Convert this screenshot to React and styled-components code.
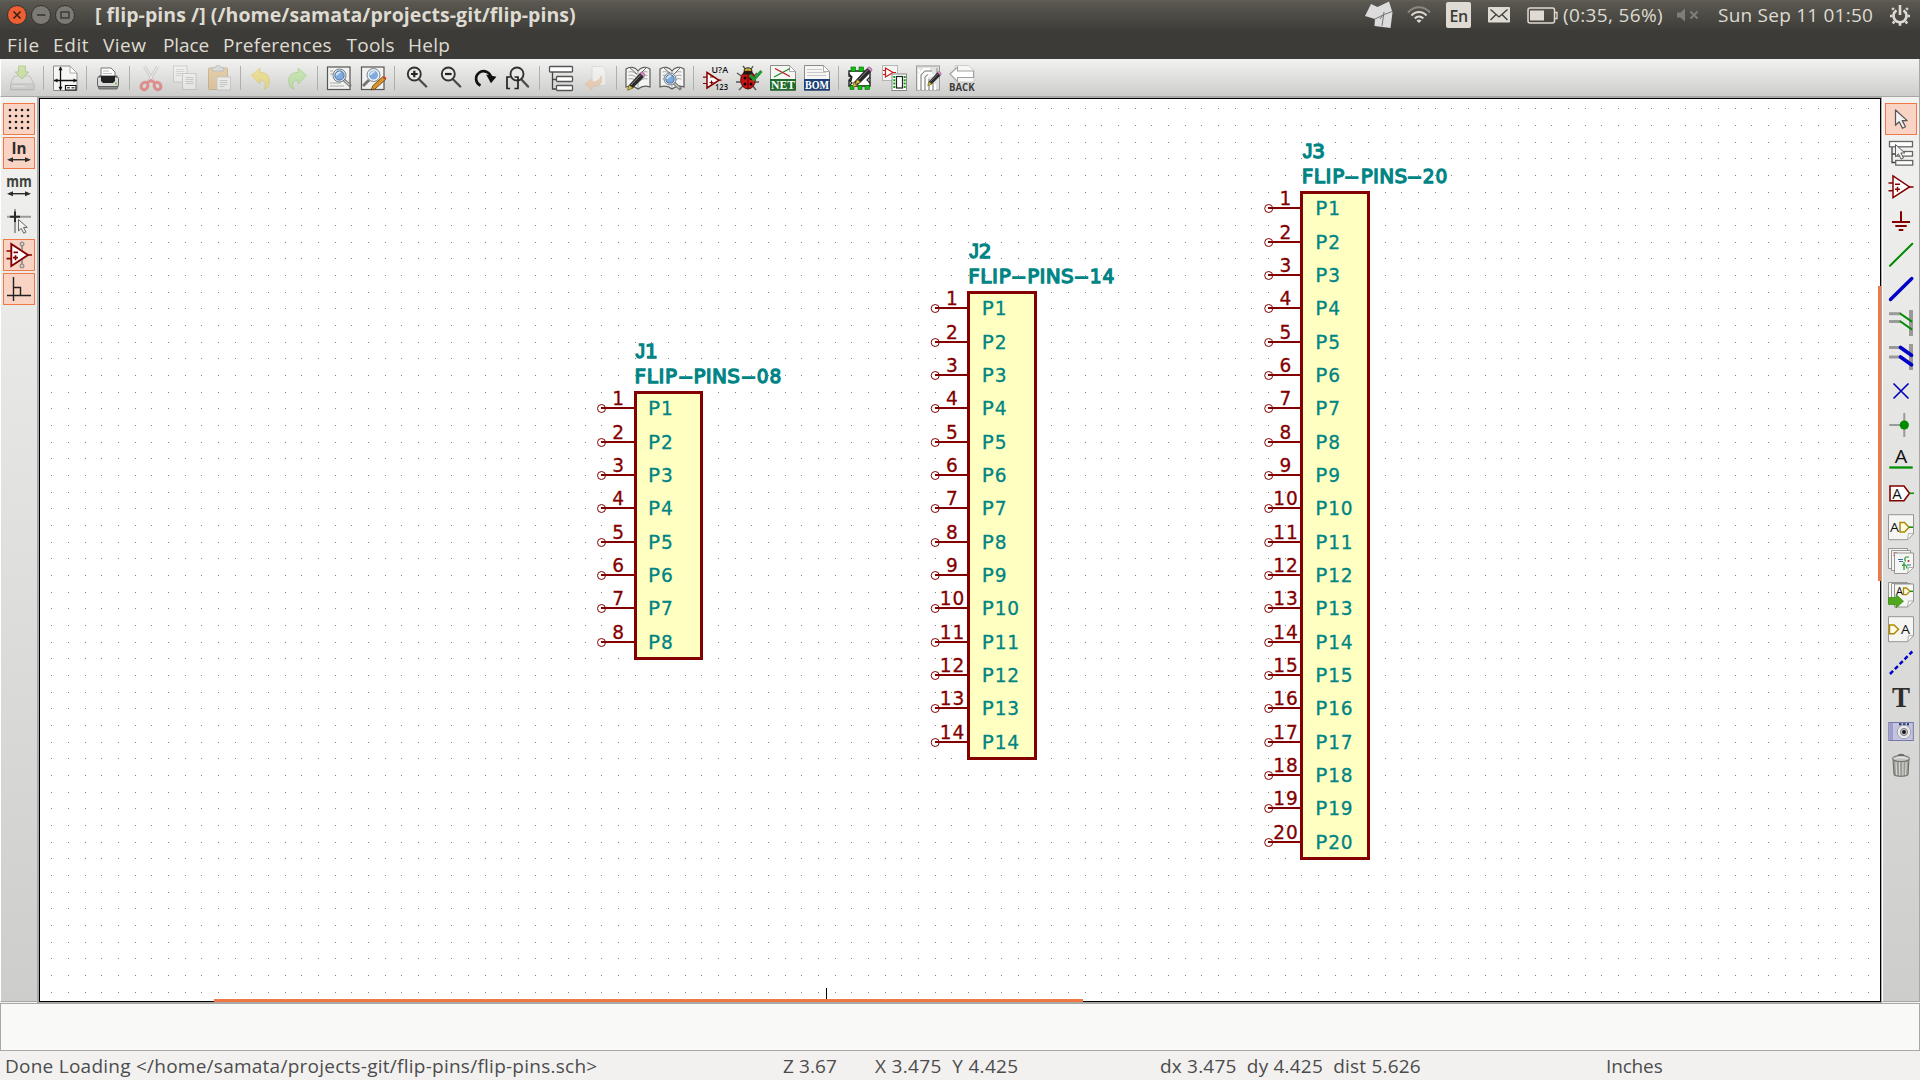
import React from "react";
import styled, { createGlobalStyle, css } from "styled-components";

const GlobalStyle = createGlobalStyle`
  * { box-sizing: border-box; }
  html, body { margin: 0; padding: 0; overflow: hidden; background: #f2f1f0; }
`;

const UI_FONT = '"Open Sans", "Noto Sans", sans-serif';
const STROKE_FONT = '"DejaVu Sans", sans-serif';
const MAROON = "#840000";
const TEAL = "#008484";

/* ---------- window chrome ---------- */

const Window = styled.div`
  display: flex;
  flex-direction: column;
  width: 1920px;
  height: 1080px;
  overflow: hidden;
  font-family: ${UI_FONT};
  color: #dfdbd2;
`;

const TitleBar = styled.header`
  display: flex;
  align-items: center;
  height: 30px;
  padding: 0 9px 0 7px;
  background: linear-gradient(#625f57 0, #5a5850 2px, #3e3d39 100%);
`;

const WindowButtons = styled.div`
  display: flex;
  gap: 4px;
  width: 88px;
`;

const WindowTitle = styled.h1`
  margin: 0;
  flex: 1;
  font-size: 19.5px;
  font-weight: 700;
  line-height: 30px;
  letter-spacing: ${(p) => p.$spacing}px;
  white-space: pre;
`;

const Tray = styled.div`
  display: flex;
  align-items: center;
  height: 30px;
`;

const TrayItem = styled.div`
  display: flex;
  align-items: center;
  width: ${(p) => p.$width}px;
  flex: none;
`;

const TrayText = styled.span`
  font-size: 19px;
  line-height: 30px;
  letter-spacing: ${(p) => p.$spacing}px;
  white-space: pre;
`;

const LanguageBadge = styled.span`
  width: 25px;
  height: 26px;
  border-radius: 2px;
  background: #dfdbd2;
  color: #3c3b37;
  font-size: 16px;
  font-weight: 600;
  line-height: 29px;
  text-align: center;
  letter-spacing: -0.5px;
`;

const MenuBar = styled.nav`
  display: flex;
  height: 29px;
  padding-left: 7px;
  background: #3c3b37;
`;

const MenuItem = styled.span`
  width: ${(p) => p.$width}px;
  font-size: 19px;
  line-height: 30px;
  letter-spacing: ${(p) => p.$spacing || 0}px;
  white-space: nowrap;
`;

/* ---------- toolbars ---------- */

const TopToolbar = styled.div`
  display: flex;
  align-items: center;
  height: 38px;
  padding-left: 4px;
  border-left: 1px solid #fff;
  border-right: 1px solid #a9a8a7;
  border-bottom: 1px solid #a9a8a7;
  background: linear-gradient(#f2f2f0, #cdcdcb);
`;

const ToolButton = styled.span`
  display: flex;
  align-items: center;
  justify-content: center;
  width: 34px;
  height: 37px;
  opacity: ${(p) => (p.$disabled ? 0.42 : 1)};
  svg { width: 26px; height: 26px; margin-top: 1px; overflow: visible; }
`;

const Separator = styled.span`
  width: 1px;
  height: 24px;
  margin: 0 4px;
  background: #b0afae;
`;

const Workspace = styled.main`
  display: flex;
  height: 907px;
  background: #a9a8a7;
`;

const SideToolbar = styled.div`
  display: flex;
  flex-direction: column;
  gap: 2px;
  width: ${(p) => p.$width}px;
  height: 905px;
  padding: 6px 0 0 2px;
  border-left: 1px solid #fff;
  border-bottom: 1px solid #a9a8a7;
  box-shadow: 0 1px 0 #f2f1f0;
  background: linear-gradient(#f2f2f0, #cdcdcb);
  ${(p) => p.$edge && css`border-right: 1px solid #a9a8a7;`}
`;

const SideButton = styled.span`
  display: block;
  width: 32px;
  height: 32px;
  ${(p) =>
    p.$active &&
    css`
      background: #f9d3c4;
      box-shadow: inset 0 0 0 1px #f07746;
    `}
  svg { display: block; width: 32px; height: 32px; overflow: visible; }
`;

const CanvasFrame = styled.section`
  width: 1845px;
  padding: 1px 1px 2px 2px;
`;

const Canvas = styled.div`
  position: relative;
  width: 1842px;
  height: 904px;
  border: 1px solid #000;
  background: #fff;
  svg { display: block; }
`;

const ScrollThumb = styled.i`
  position: absolute;
  background: #f07746;
  ${(p) =>
    p.$vertical
      ? css`right: -1px; top: 187px; width: 3px; height: 295px;`
      : css`left: 174px; bottom: -1px; width: 869px; height: 3px;`}
`;

const MessagePanel = styled.div`
  height: 47px;
  border: 1px solid #a9a8a7;
  border-top: 0;
  background: #f9f9f7;
`;

const StatusBar = styled.footer`
  display: grid;
  grid-template-columns: 778px 92px 285px 446px 1fr;
  height: 29px;
  padding-left: 5px;
  background: #f2f1f0;
  color: #4c4c4c;
`;

const StatusField = styled.span`
  font-size: 19px;
  line-height: 31px;
  letter-spacing: ${(p) => p.$spacing}px;
  white-space: pre;
`;

/* ---------- icon helpers ---------- */

const Svg26 = ({ children }) => (
  <svg viewBox="0 0 26 26" fill="none">{children}</svg>
);
const Svg32 = ({ children }) => (
  <svg viewBox="0 0 32 32" fill="none">{children}</svg>
);
const Glyph = ({ x, y, size, w, fill = "#111", weight = 400, serif, children }) => (
  <text
    x={x}
    y={y}
    fontSize={size}
    fill={fill}
    fontWeight={weight}
    fontFamily={serif ? '"Liberation Serif", serif' : '"Open Sans", sans-serif'}
    textLength={w}
    lengthAdjust="spacingAndGlyphs"
  >
    {children}
  </text>
);

const Page = ({ x = 1, y = 1, w = 24, h = 24, fold = 6 }) => (
  <>
    <path d={`M${x} ${y}h${w - fold}l${fold} ${fold}v${h - fold}h-${w}z`} fill="#f6f6f5" stroke="#8b8b89" strokeWidth="1" />
    <path d={`M${x + w - fold} ${y}v${fold}h${fold}z`} fill="#fff" stroke="#9a9a98" strokeWidth=".8" />
  </>
);

const Pencil = ({ x = 0, y = 0, s = 1 }) => (
  <g transform={`translate(${x} ${y}) scale(${s})`}>
    <path d="M3 13L14 1l4 4L7 16l-5 2z" fill="#2c2c2c" />
    <path d="M5 13L14.5 3" stroke="#8a8a8a" strokeWidth="1" />
    <path d="M3 13l4 3-5.5 2.3z" fill="#d8c23a" stroke="#5d5212" strokeWidth=".6" />
    <path d="M14 1l1.500-1c1-.6 4 2 3.300 3.300L18 5z" fill="#d98bc8" stroke="#8f4d82" strokeWidth=".6" />
  </g>
);

const Book = () => (
  <>
    <path d="M1 4c4-3 9-2 12 2 3-4 8-5 12-2v18c-4-1.500-9-.5-12 2-3-2.500-8-3.500-12-2z" fill="#f4f4f3" stroke="#5c5c5c" strokeWidth="1.200" />
    <path d="M13 6v17M3.500 7c3-1 6 0 8 2.500M3.500 10.500c3-1 6 0 8 2.500M3.500 14c3-1 6 0 8 2.500M22.500 7c-3-1-6 0-8 2.500M22.500 10.500c-3-1-6 0-8 2.500M22.500 14c-3-1-6 0-8 2.500" stroke="#a5a5a5" />
    <path d="M5 3l7 6M21 3l-6 6" stroke="#6e6e6e" />
  </>
);

const Lens = ({ cx, cy, r = 5.5 }) => (
  <>
    <path d={`M${cx + r * 0.7} ${cy + r * 0.7}l6.500 6`} stroke="#777" strokeWidth="3.200" strokeLinecap="round" />
    <path d={`M${cx + r * 0.7 + 1} ${cy + r * 0.7 + 1}l5 4.600`} stroke="#cfcfcf" strokeWidth="1.200" />
    <circle cx={cx} cy={cy} r={r} fill="#7fabdc" stroke="#e8e8e8" strokeWidth="2.200" />
    <circle cx={cx} cy={cy} r={r + 1} stroke="#5a6472" strokeWidth=".8" />
    <circle cx={cx} cy={cy} r={r - 0.9} stroke="#2d5f9e" strokeWidth=".9" />
    <path d={`M${cx - 3} ${cy}a3.500 3.500 0 0 1 4-3`} stroke="#d6e8fa" strokeWidth="1.800" />
  </>
);

/* ---------- top toolbar icons ---------- */

const SaveIcon = () => (
  <Svg26>
    <path d="M5 11h16l4 8v6H1.500v-6z" fill="#dcdcda" stroke="#9b9b99" />
    <path d="M1.500 19H25v5.500H1.500z" fill="#c2c2c0" stroke="#979795" />
    <path d="M4 21.500h12" stroke="#eee" />
    <path d="M9.500 1h7v6H20l-7 7-7-7h3.500z" fill="#a9d65a" stroke="#79a832" />
  </Svg26>
);
const PageSetupIcon = () => (
  <Svg26>
    <Page x={1.5} y={1} w={23.500} h={24.500} fold={7} />
    <path d="M8.500 2v23M2 15.500h23" stroke="#111" strokeWidth="1.300" />
    <path d="M8.500 1.500l2 3.800h-4zM8.500 25.500l2-3.800h-4zM2 15.500l3.500-2v4zM25 15.500l-3.500-2v4z" fill="#111" />
    <path d="M13.500 20.500H24v4.500H13.500z" fill="#fff" stroke="#111" strokeWidth="1.200" />
    <path d="M15 22.800h3M19.500 22.800h3" stroke="#111" />
  </Svg26>
);
const PrintIcon = () => (
  <Svg26>
    <path d="M6 12V3h10l4 4v5z" fill="#fff" stroke="#777" />
    <path d="M8 6h6M8 8.500h9" stroke="#bbb" />
    <path d="M4 10.500h18l1.500 4h-21z" fill="#5a5a5a" />
    <rect x="2.500" y="12" width="21" height="9.500" rx="1.500" fill="#d9d9d8" stroke="#666" />
    <path d="M6 11h14v5l-2 2H8l-2-2z" fill="#222" />
    <path d="M3 21.500h20l-1 2.500H4z" fill="#8b8b8b" stroke="#555" strokeWidth=".8" />
    <circle cx="21" cy="18.500" r=".9" fill="#5fae35" />
  </Svg26>
);
const CutIcon = () => (
  <Svg26>
    <path d="M6.500 1.500l9 15M19.500 1.500l-9 15" stroke="#a4a4a2" strokeWidth="3" />
    <path d="M6.500 1.500l8.500 14M19.500 1.500l-8.500 14" stroke="#f3f3f3" strokeWidth="1.200" />
    <g stroke="#e22b2b" strokeWidth="3">
      <ellipse cx="6.500" cy="21" rx="3.200" ry="3.800" transform="rotate(35 6.500 21)" />
      <ellipse cx="19.500" cy="21" rx="3.200" ry="3.800" transform="rotate(-35 19.500 21)" />
      <path d="M9 18l4-2.500 4 2.500" />
    </g>
  </Svg26>
);
const CopyIcon = () => (
  <Svg26>
    <rect x="1.500" y="1" width="13.500" height="16" fill="#fafafa" stroke="#a7a7a5" />
    <path d="M4 4.500h8.500M4 6.500h8.500M4 8.500h8.500M4 10.500h5" stroke="#bbb" />
    <rect x="10.500" y="8.500" width="13.500" height="16" fill="#fafafa" stroke="#a7a7a5" />
    <path d="M13.500 12.500h8M13.500 14.500h8M13.500 16.500h8M13.500 18.500h8" stroke="#aaa" />
  </Svg26>
);
const PasteIcon = () => (
  <Svg26>
    <rect x="2.500" y="3" width="19" height="21.500" rx="1" fill="#e0a857" stroke="#a87a34" />
    <path d="M6.500 5V2.500h3a2.500 2 0 0 1 5 0h3V6h-11z" fill="#c9c9c7" stroke="#8b8b89" />
    <rect x="11" y="12" width="13.500" height="13" fill="#fff" stroke="#a7a7a5" />
    <path d="M13.500 15.500h8M13.500 17.500h8M13.500 19.500h8M13.500 21.500h5" stroke="#aaa" />
  </Svg26>
);
const UndoIcon = () => (
  <Svg26>
    <path d="M2.500 10.500L11 3v4.500c7 0 11 4 8.500 13-1 2-2 3-4.500 3.500 2-3 2.500-9-4-9v4z" fill="#f4d52e" stroke="#d8b51c" />
  </Svg26>
);
const RedoIcon = () => (
  <Svg26>
    <path d="M23.500 10.500L15 3v4.500c-7 0-11 4-8.500 13 1 2 2 3 4.500 3.500-2-3-2.500-9 4-9v4z" fill="#9be36d" stroke="#74bf48" />
  </Svg26>
);
const FindIcon = () => (
  <Svg26>
    <rect x="1.500" y="2" width="22.500" height="22.500" fill="#f1f1f0" stroke="#555" strokeWidth="1.200" />
    <path d="M4 6h3M4 9h3M4 18h11M4 21h14" stroke="#aaa" />
    <Lens cx={13.500} cy={10.500} />
  </Svg26>
);
const FindReplaceIcon = () => (
  <Svg26>
    <rect x="1.500" y="2" width="22.500" height="22.500" fill="#f1f1f0" stroke="#555" strokeWidth="1.200" />
    <path d="M9 15l-6 6" stroke="#777" strokeWidth="3" />
    <circle cx="13.500" cy="10" r="5.500" fill="#7fabdc" stroke="#f0f0f0" strokeWidth="2" />
    <circle cx="13.500" cy="10" r="6.500" stroke="#5a6472" strokeWidth=".8" />
    <path d="M10.500 10a3.500 3.500 0 0 1 4-3" stroke="#d6e8fa" strokeWidth="1.800" />
    <path d="M11 25l2-4.500L22.500 12l3 2.500L15 24z" fill="#d9952b" stroke="#6b4a12" strokeWidth=".9" />
    <path d="M22.500 12l1.500-1 2.500 2-1 1.500z" fill="#d53a2c" />
  </Svg26>
);
const ZoomGlyph = ({ plus }) => (
  <Svg26>
    <path d="M16.200 14.500l7 7" stroke="#4c4c4a" strokeWidth="2.400" strokeLinecap="round" />
    <circle cx="11.300" cy="9" r="6.500" fill="#e9e9e8" stroke="#333331" strokeWidth="1.900" />
    <path d={plus ? "M8 9h6.600M11.300 5.700v6.600" : "M8 9h6.600"} stroke="#222" strokeWidth="2.200" />
  </Svg26>
);
const RefreshIcon = () => (
  <Svg26>
    <path d="M9.500 20.500a7.500 7.500 0 1 1 10.500-8" stroke="#111" strokeWidth="2.700" />
    <path d="M14.500 10.500h10.500L21 18z" fill="#111" transform="rotate(12 19.500 13)" />
  </Svg26>
);
const ZoomFitIcon = () => (
  <Svg26>
    <path d="M16 14l7 7.500" stroke="#4c4c4a" strokeWidth="2.400" strokeLinecap="round" />
    <circle cx="12" cy="9" r="6.500" fill="#e9e9e8" stroke="#333331" strokeWidth="1.900" />
    <path d="M5.500 12H2v11.500h3M9.500 12H13v11.500H9.500" stroke="#222" strokeWidth="1.700" />
  </Svg26>
);
const HierarchyIcon = () => (
  <Svg26>
    <path d="M4.500 7v17h5M4.500 14.500h4" stroke="#444" strokeWidth="1.300" />
    <g fill="#fff" stroke="#555" strokeWidth="1.300">
      <rect x="1.500" y="1.500" width="23" height="5.500" rx=".8" />
      <rect x="8.500" y="11.500" width="16" height="5" rx=".8" />
      <rect x="8.500" y="20.500" width="16" height="5" rx=".8" />
    </g>
  </Svg26>
);
const LeaveSheetIcon = () => (
  <Svg26>
    <path d="M10 1.500h10.500L24 5.500v15H10z" fill="#fff" stroke="#ccc" />
    <path d="M3 19l7-5v3c5 0 8-2 9-6 2.500 7-2 11-9 10.500V25z" fill="#f6b983" stroke="#eb9f5e" strokeWidth=".7" />
  </Svg26>
);
const LibEditIcon = () => (
  <Svg26><Book /><Pencil x={1} y={7} /></Svg26>
);
const LibBrowseIcon = () => (
  <Svg26><Book /><Lens cx={11} cy={14} r={5} /></Svg26>
);
const OpAmpShape = ({ x, y, w, h }) => (
  <path d={`M${x} ${y}v${h}l${w}-${h / 2}z`} fill="#fff" stroke={MAROON} strokeWidth="1.500" />
);
const AnnotateIcon = () => (
  <Svg26>
    <OpAmpShape x={5} y={7.500} w={12} h={15.500} />
    <path d="M1 12.200h4M1 18.500h4M17 15.200h2.500M8 12h3M7.500 17.500h4M9.500 15.500v4" stroke={MAROON} strokeWidth="1.200" />
    <Glyph x={9.500} y={8} size={9.500} w={16.500} weight={600}>U?A</Glyph>
    <Glyph x={13} y={25} size={9.500} w={13} weight={600}>123</Glyph>
  </Svg26>
);
const BugIcon = () => (
  <Svg26>
    <path d="M7 1l4 5M17 1l-3 5M1 8l6 4M0 17h6M3 25l5-5M21 8l-4 4M23 17h-5M20 25l-4-5" stroke="#555" strokeWidth="1.400" />
    <path d="M8 6.500C8 1.500 16 1.500 16 6.500z" fill="#c7b630" stroke="#222" />
    <ellipse cx="12" cy="15" rx="7.300" ry="9" fill="#cc1414" stroke="#5b0808" />
    <path d="M6.500 9.500h11L16 6.500H8z" fill="#1a1a1a" />
    <path d="M12 9v15" stroke="#4b0505" />
    <circle cx="9" cy="13" r="1.500" fill="#1a0000" /><circle cx="15" cy="13.500" r="1.500" fill="#1a0000" />
    <circle cx="9" cy="19" r="1.500" fill="#1a0000" /><circle cx="15" cy="19" r="1.500" fill="#1a0000" />
    <path d="M14 10l4 4.500L25.500 6" stroke="#1f9a33" strokeWidth="3" />
  </Svg26>
);
const FileBadge = ({ color, label, children }) => (
  <Svg26>
    <Page x={0.5} y={0.5} w={25} h={25} fold={6} />
    {children}
    <rect x="0" y="14" width="26" height="11.500" fill={color} />
    <Glyph x={1} y={23.500} size={12} w={24} weight={700} serif fill="#fff">{label}</Glyph>
  </Svg26>
);
const NetIcon = () => (
  <FileBadge color="#1e6b2a" label="NET">
    <path d="M4 12L20 3.500" stroke="#1e8a2a" strokeWidth="1.200" />
    <path d="M5 3.500l15 8" stroke="#b51a1a" strokeWidth="1.300" />
  </FileBadge>
);
const BomIcon = () => (
  <FileBadge color="#1c3f78" label="BOM">
    <path d="M3 4.500h15M3 7.500h19M3 10.500h19" stroke="#c9c9c8" />
  </FileBadge>
);
const CvpcbIcon = () => (
  <Svg26>
    <path d="M2 6h21v15H2v-5a2.500 2.500 0 0 0 0-5z" fill="#fff" stroke="#222" strokeWidth="1.400" />
    <path d="M2 9l3 3-3 3 3 3-3 3M23 12l-3 3 3 3" stroke="#222" strokeWidth="1.200" />
    <g fill="#10c010" stroke="#06650a" strokeWidth=".6">
      <rect x="4" y="2" width="4.500" height="4.500" /><rect x="12" y="2" width="4.500" height="4.500" />
      <rect x="3" y="20.500" width="4" height="4" /><rect x="11" y="20.500" width="4" height="4" /><rect x="18" y="20.500" width="4.500" height="4" />
    </g>
    <Pencil x={4} y={5} s={0.95} />
    <Pencil x={7} y={2} s={0.95} />
  </Svg26>
);
const FootprintIcon = () => (
  <Svg26>
    <rect x="1.500" y="0.500" width="15" height="15" fill="#f7f7f6" stroke="#b5b5b3" />
    <path d="M4.500 3v9l7.500-4.500z" fill="#fff" stroke="#c41a1a" strokeWidth="1.200" />
    <path d="M2 5.500h2.500M2 9.500h2.500M12 7.500h3" stroke="#c41a1a" />
    <rect x="11" y="9" width="14.500" height="16.500" fill="#fff" stroke="#888" />
    <rect x="15.500" y="11.500" width="6" height="11.500" fill="#fff" stroke="#222" strokeWidth="1.200" />
    <path d="M13.300 11v12.500M23.700 11v12.500" stroke="#0fa00f" strokeWidth="2" strokeDasharray="2 1.300" />
  </Svg26>
);
const PcbIcon = () => (
  <Svg26>
    <rect x="1.500" y="1" width="23" height="24" fill="#e2e2e1" stroke="#9a9a98" />
    <path d="M4 25V9l5-5h6M8 25V11l3-3h6M12 25V12.500l2-2h7M16 25v-9M20 25v-6M4 4v3" stroke="#fff" strokeWidth="1.800" />
    <path d="M6 25V10l4-4h7M10 25V12l3-2.500M14 25V14M18 25v-7M22 3v6" stroke="#8c8c8a" strokeWidth="1" />
    <Pencil x={11.500} y={6.500} s={0.78} />
  </Svg26>
);
const BackIcon = () => (
  <Svg26>
    <path d="M6 .5h13.500l5.500 5V17H6z" fill="#f7f7f6" stroke="#c4c4c2" strokeWidth=".8" />
    <path d="M1 9L8.500 2v4H24.500v6.500H8.500v4z" fill="#fff" stroke="#a0a09e" strokeWidth="1.100" />
    <Glyph x={0} y={25.800} size={11} w={25.500} weight={700} fill="#3d3d3d">BACK</Glyph>
  </Svg26>
);

const TOP_TOOLS = [
  [[SaveIcon, true]],
  [[PageSetupIcon]],
  [[PrintIcon]],
  [[CutIcon, true], [CopyIcon, true], [PasteIcon, true]],
  [[UndoIcon, true], [RedoIcon, true]],
  [[FindIcon], [FindReplaceIcon]],
  [[() => <ZoomGlyph plus />], [() => <ZoomGlyph />], [RefreshIcon], [ZoomFitIcon]],
  [[HierarchyIcon], [LeaveSheetIcon, true]],
  [[LibEditIcon], [LibBrowseIcon]],
  [[AnnotateIcon], [BugIcon], [NetIcon], [BomIcon]],
  [[CvpcbIcon], [FootprintIcon], [PcbIcon], [BackIcon]],
];

/* ---------- side toolbar icons ---------- */

const PITCH = [7, 13, 19, 25];
const GridIcon = () => (
  <Svg32>
    {PITCH.map((y) => PITCH.map((x) => <circle key={`${x}-${y}`} cx={x} cy={y} r="1.300" fill="#1c1c1c" />))}
  </Svg32>
);
const DoubleArrow = () => (
  <>
    <path d="M6 22.700h20" stroke="#2c2c2c" strokeWidth="1.400" />
    <path d="M4 22.700l6-2.500v5zM28 22.700l-6-2.500v5z" fill="#2c2c2c" />
  </>
);
const InchIcon = () => (
  <Svg32><Glyph x={8.500} y={17} size={15.500} w={15} weight={700} fill="#2c2c2c">In</Glyph><DoubleArrow /></Svg32>
);
const MmIcon = () => (
  <Svg32><Glyph x={3.300} y={15.700} size={16.500} w={25.500} weight={700} fill="#3d423b">mm</Glyph><DoubleArrow /></Svg32>
);
const Pointer = ({ x, y, s = 1 }) => (
  <path
    transform={`translate(${x} ${y}) scale(${s})`}
    d="M0 0v15.300l3.700-3.500 3.300 6.500 3-1.500-3.300-6.200h5z"
    fill="#f3f3f2"
    stroke="#555"
    strokeWidth="1.200"
    strokeLinejoin="round"
  />
);
const CursorShapeIcon = () => (
  <Svg32>
    <path d="M4 11.700h24M12 4v24" stroke="#9b9b99" strokeWidth="2" />
    <path d="M7 11.700h10M12 6.500v10.500" stroke="#2a2a2a" strokeWidth="2" />
    <Pointer x={15.500} y={14.500} s={0.75} />
  </Svg32>
);
const HiddenPinIcon = () => (
  <Svg32>
    <path d="M8.300 5v22L25 16z" fill="#fff" stroke={MAROON} strokeWidth="1.900" />
    <path d="M19 6v5M19 21v5" stroke="#989492" strokeWidth="2" />
    <circle cx="19" cy="5" r="1.800" stroke="#989492" strokeWidth="1.400" />
    <circle cx="19" cy="27" r="1.800" stroke="#989492" strokeWidth="1.400" />
    <path d="M3.500 12h5M3.500 19.700h5M24.500 16h4.500M10.500 13.300h4.500M10 18.700h5M12.500 16.200v5" stroke={MAROON} strokeWidth="1.700" />
  </Svg32>
);
const OrthoIcon = () => (
  <Svg32>
    <path d="M10.500 4v24M4 22.500h24M10.500 14.500h7v8" stroke="#222" strokeWidth="1.400" />
  </Svg32>
);

const ArrowToolIcon = () => (<Svg32><Pointer x={10.500} y={7} /></Svg32>);
const NavHierarchyIcon = () => (
  <Svg32>
    <path d="M7 10v15.500h4M7 17h4" stroke="#444" strokeWidth="1.300" />
    <g fill="#fff" stroke="#666" strokeWidth="1.300">
      <rect x="4.500" y="4.500" width="23" height="5.300" />
      <rect x="12" y="14.500" width="15.500" height="4.600" />
      <rect x="10.700" y="23.500" width="17" height="4.600" />
    </g>
    <Pointer x={10.500} y={7.500} s={0.8} />
  </Svg32>
);
const ComponentIcon = () => (
  <Svg32>
    <path d="M8 5v21.700L24.500 16z" fill="#fff" stroke={MAROON} strokeWidth="1.500" />
    <path d="M3.500 12H8M3.500 19.700H8M24 16h4.500M10 13.300h5M10 18.200h5M12.500 15.700v5" stroke={MAROON} strokeWidth="1.400" />
  </Svg32>
);
const PowerIcon = () => (
  <Svg32>
    <path d="M16 6.300V17M7 17h18M10.300 21h11.400M13.700 25h4.600" stroke={MAROON} strokeWidth="2" />
  </Svg32>
);
const WireIcon = () => (
  <Svg32><path d="M5 26.700L27.300 4.700" stroke="#008a00" strokeWidth="2" strokeLinecap="round" /></Svg32>
);
const BusIcon = () => (
  <Svg32><path d="M5.500 26.500L26.800 5.500" stroke="#0000c8" strokeWidth="3.400" strokeLinecap="round" /></Svg32>
);
const EntryIcon = ({ color, width, ys }) => (
  <Svg32>
    <path d="M26 3v26" stroke="#9a9a98" strokeWidth="4" />
    {ys.map((y) => (
      <g key={y}>
        <path d={`M4 ${y}h12`} stroke="#9a9a98" strokeWidth="3" />
        <path d={`M15.500 ${y}l11 7.700`} stroke={color} strokeWidth={width} strokeLinecap="round" />
      </g>
    ))}
  </Svg32>
);
const WireEntryIcon = () => <EntryIcon color="#008a00" width={2} ys={[6.700, 14.500]} />;
const BusEntryIcon = () => <EntryIcon color="#0000c8" width={3.800} ys={[6.500, 16]} />;
const NoConnectIcon = () => (
  <Svg32><path d="M8.500 8.500l15 15M23.500 8.500l-15 15" stroke="#0000b8" strokeWidth="1.600" /></Svg32>
);
const JunctionIcon = () => (
  <Svg32>
    <path d="M19.300 4v24M4.300 16H16" stroke="#9a9a98" strokeWidth="2" />
    <circle cx="19.300" cy="16" r="4.600" fill="#008a00" />
  </Svg32>
);
const LabelIcon = () => (
  <Svg32>
    <Glyph x={9.800} y={20} size={18.500} w={12.500}>A</Glyph>
    <path d="M4.300 24.500h23.400" stroke="#009000" strokeWidth="2.300" />
  </Svg32>
);
const GlobalLabelIcon = () => (
  <Svg32>
    <path d="M5 9h14l5.500 7.300L19 23.700H5z" fill="#fff" stroke={MAROON} strokeWidth="1.600" />
    <path d="M24.500 16.300H29" stroke="#009000" strokeWidth="1.500" />
    <Glyph x={7.300} y={21.500} size={14} w={9.500}>A</Glyph>
  </Svg32>
);
const Sheet = ({ x = 3.500, y = 3.700, w = 25, h = 25 }) => (
  <>
    <path d={`M${x} ${y}h${w}v${h - 6}l-6 6h-${w - 6}z`} fill="#f5f5f4" stroke="#8c8c8a" strokeWidth=".9" />
    <path d={`M${x + w} ${y + h - 6}l-5 0-1 6z`} fill="#fff" stroke="#9a9a98" strokeWidth=".8" />
  </>
);
const HierLabelIcon = () => (
  <Svg32>
    <Sheet />
    <Glyph x={5} y={21} size={13.500} w={9}>A</Glyph>
    <path d="M15 11.500h4.500l4.500 4.700-4.500 4.800H15z" fill="#fffbe6" stroke="#b08a00" strokeWidth="1.500" />
    <path d="M24 16.200h4" stroke="#009000" strokeWidth="1.500" />
  </Svg32>
);
const HierSheetIcon = () => (
  <Svg32>
    <Sheet x={3.500} y={3.500} w={19} h={20} />
    <Sheet x={6.500} y={5.500} w={19} h={20} />
    <path d="M8.500 8h3v4M8.500 10.500h3" stroke="#b01818" strokeWidth="1.200" />
    <Sheet x={9.500} y={8} w={19} h={20.500} />
    <path d="M13 14.500h5M14 16.500h4M22 20h4" stroke="#2a78a8" strokeWidth="1.200" />
    <path d="M24 12h-2.500c-2 0-2 3-1 4.500M17 20.500c3-2 5 0 5 3M19 17v8" stroke="#1e9a2a" strokeWidth="1.200" />
    <circle cx="23.500" cy="16" r="1" fill="#c02020" />
  </Svg32>
);
const ImportLabelIcon = () => (
  <Svg32>
    <Sheet x={3.500} y={3.500} w={19} h={20} />
    <Sheet x={6.500} y={4.500} w={19} h={20} />
    <Sheet x={9.500} y={5} w={19} h={23} />
    <Glyph x={11} y={16} size={10.500} w={7}>A</Glyph>
    <path d="M18.500 9h3l3.300 3.300-3.300 3.300h-3z" fill="#fffbe6" stroke="#b08a00" strokeWidth="1.300" />
    <path d="M25 12.300h3" stroke="#009000" strokeWidth="1.300" />
    <path d="M3.500 18.500H11V15.500l7.500 6.700L11 29v-3.500H3.500z" fill="#4fa81e" stroke="#3a8510" strokeWidth=".7" />
  </Svg32>
);
const SheetPinIcon = () => (
  <Svg32>
    <Sheet />
    <path d="M4.500 12h4.500l4.500 4.300-4.500 4.400H4.500z" fill="#fffbe6" stroke="#b08a00" strokeWidth="1.500" />
    <Glyph x={16} y={21} size={13.500} w={9}>A</Glyph>
  </Svg32>
);
const DashedLineIcon = () => (
  <Svg32><path d="M5 27L27.300 4.500" stroke="#0000c8" strokeWidth="2.500" strokeDasharray="4.300 2.600" /></Svg32>
);
const TextIcon = () => (
  <Svg32><Glyph x={7} y={25.700} size={29} w={18} weight={700} serif fill="#2e2e2e">T</Glyph></Svg32>
);
const ImageIcon = () => (
  <Svg32>
    <rect x="3.800" y="7.500" width="24.500" height="18" fill="#c4c4e2" stroke="#7777a8" />
    <rect x="4.500" y="8" width="3.500" height="17" fill="#9d9dcc" />
    <path d="M14 9.300h10" stroke="#14345e" strokeWidth="2" strokeDasharray="2.500 1.500" />
    <circle cx="19" cy="17" r="6.800" fill="#e9e9ee" stroke="#a2a2a8" />
    <circle cx="19" cy="17" r="3.600" fill="#c0c0c4" stroke="#85858b" />
    <circle cx="19" cy="17" r="1.900" fill="#111" />
  </Svg32>
);
const TrashIcon = () => (
  <Svg32>
    <path d="M8 10h16l-1 16c-2 1.700-12 1.700-14 0z" fill="#9a9a95" stroke="#6b6b67" />
    <path d="M11 13l.6 13M14.500 13l.2 13.500M18 13l-.2 13.500M21.200 13l-.6 13" stroke="#d5d5d1" strokeWidth="1.200" />
    <ellipse cx="16" cy="9.500" rx="8.600" ry="3" fill="#c6c6c2" stroke="#6b6b67" />
    <path d="M10.500 9.500c2-1.500 9-1.500 11 0" stroke="#efefec" />
    <path d="M13 7c0-2.300 6-2.300 6 0" stroke="#6b6b67" strokeWidth="1.300" />
  </Svg32>
);

const LEFT_TOOLS = [
  [GridIcon, true], [InchIcon, true], [MmIcon], [CursorShapeIcon], [HiddenPinIcon, true], [OrthoIcon, true],
];
const RIGHT_TOOLS = [
  [ArrowToolIcon, true], [NavHierarchyIcon], [ComponentIcon], [PowerIcon], [WireIcon], [BusIcon],
  [WireEntryIcon], [BusEntryIcon], [NoConnectIcon], [JunctionIcon], [LabelIcon], [GlobalLabelIcon],
  [HierLabelIcon], [HierSheetIcon], [ImportLabelIcon], [SheetPinIcon], [DashedLineIcon], [TextIcon],
  [ImageIcon], [TrashIcon],
];

/* ---------- schematic ---------- */

const PinText = styled.text`
  font: 20px ${STROKE_FONT};
  fill: ${(p) => p.$color};
  stroke: ${(p) => p.$color};
  stroke-width: 0.3px;
`;

const FieldText = styled.text`
  font: 20px ${STROKE_FONT};
  fill: ${TEAL};
  stroke: ${TEAL};
  stroke-width: 1.3px;
`;

/* Digits sit on a fixed advance; each glyph is slightly condensed inside it. */
const digitRun = (text, start, advance) =>
  [...text].map((ch, i) => (
    <tspan key={i} x={start + i * advance} textLength="11.800" lengthAdjust="spacingAndGlyphs">{ch}</tspan>
  ));

const Connector = ({ reference, count, x, y, width, nudge }) => {
  const digits = String(count).padStart(2, "0");
  const pins = Array.from({ length: count }, (_, i) => i);
  const lx = x + nudge;
  return (
    <g>
      <FieldText x={lx + 1.500} y={y - 32.700}>
        <tspan fontFamily="Liberation Sans" textLength="9.500" lengthAdjust="spacingAndGlyphs">{reference[0]}</tspan>
        <tspan x={lx + 11}>{reference[1]}</tspan>
      </FieldText>
      <FieldText x={lx} y={y - 8}>
        <tspan x={lx + 0.500} textLength="42.500">FLIP</tspan>
        <tspan x={x + 42.800} fontWeight="700" strokeWidth="0" textLength="18" lengthAdjust="spacingAndGlyphs">-</tspan>
        <tspan x={lx + 59.500} textLength="46.500">PINS</tspan>
        <tspan x={x + 105.500} fontWeight="700" strokeWidth="0" textLength="18" lengthAdjust="spacingAndGlyphs">-</tspan>
        {digitRun(digits, x + 122.800, 12.800)}
      </FieldText>
      <rect x={x + 1.500} y={y + 1.500} width={width - 3} height={Math.round(count * 33.333) - 1} fill="#ffffc2" stroke={MAROON} strokeWidth="3" shapeRendering="crispEdges" />
      {pins.map((i) => {
        const py = y + 17 + Math.round(i * 33.333 + 0.2);
        const number = String(i + 1);
        return (
          <g key={i}>
            <circle cx={lx - 32.500} cy={py + 0.500} r="4" fill="none" stroke={MAROON} strokeWidth="1" />
            <path d={`M${x - 33 + Math.round(nudge)} ${py}H${x}`} stroke={MAROON} strokeWidth="2" shapeRendering="crispEdges" />
            <PinText $color={MAROON} y={py - 3.500}>
              {digitRun(number, lx - 15.700 + 0.400 - number.length * 6.350, 12.700)}
            </PinText>
            <PinText $color={TEAL} y={py + 6.700}>
              <tspan x={lx + 14}>P</tspan>
              {digitRun(number, lx + 27.100, 12.500)}
            </PinText>
          </g>
        );
      })}
    </g>
  );
};

const GRID_X = [1, 18, 35];
const GRID_Y = [8, 25, 42];

const Schematic = () => (
  <svg width="1840" height="902" viewBox="40 99 1840 902">
    <defs>
      <pattern id="grid" width="50" height="50" patternUnits="userSpaceOnUse">
        {GRID_Y.map((y) => GRID_X.map((x) => (
          <rect key={`${x}-${y}`} x={x} y={y} width="1" height="1" fill="#848484" />
        )))}
      </pattern>
    </defs>
    <rect x="40" y="99" width="1840" height="902" fill="url(#grid)" shapeRendering="crispEdges" />
    <Connector reference="J1" count={8} x={634} y={391} width={69} nudge={0} />
    <Connector reference="J2" count={14} x={967} y={291} width={70} nudge={0.700} />
    <Connector reference="J3" count={20} x={1300} y={191} width={70} nudge={1.200} />
    <path d="M826.500 988v12" stroke="#000" />
  </svg>
);

/* ---------- panel indicators ---------- */

const WindowButton = ({ kind }) => (
  <svg width="20" height="20" viewBox="0 0 20 20" fill="none">
    <circle cx="10" cy="10" r="9.500" fill={kind === "close" ? "#ee5f33" : "#7d7a73"} stroke="#35342f" />
    {kind === "close" && <path d="M6.500 6.500l7 7M13.500 6.500l-7 7" stroke="#3c2018" strokeWidth="1.700" />}
    {kind === "min" && <path d="M6 10h8.500" stroke="#3c3b37" strokeWidth="1.700" />}
    {kind === "max" && <rect x="6" y="7" width="8" height="6" stroke="#3c3b37" strokeWidth="1.500" />}
  </svg>
);
const LeafIndicator = () => (
  <svg width="28" height="30" viewBox="0 0 28 30">
    <path d="M6 4l6.500 3L24 1.500l3.500 11-2 15.500-16-2 .5-7L0 16z" fill="#dcdcdc" />
    <path d="M9 19.500l9-4.500 9-3.500M18 15l-3 4M19 12l-2 14" stroke="#77756f" fill="none" />
  </svg>
);
const WifiIndicator = () => (
  <svg width="24" height="18" viewBox="0 0 24 18" fill="none" strokeWidth="2">
    <path d="M1 6.500C7-.5 17-.5 23 6.500" stroke="#8b8880" />
    <path d="M4.500 9.500c4-4.700 11-4.700 15 0M7.800 12.500c2.500-2.700 6-2.700 8.500 0" stroke="#dfdbd2" />
    <path d="M12 17l-2.500-2.500c1.500-1.200 3.500-1.200 5 0z" fill="#dfdbd2" />
  </svg>
);
const MailIndicator = () => (
  <svg width="22" height="16" viewBox="0 0 22 16" fill="none">
    <rect width="22" height="15.500" rx="1" fill="#dfdbd2" />
    <path d="M2.500 2.500l8.500 7.500 8.500-7.500M2.500 13l5.500-5.500M19.500 13L14 7.500" stroke="#3c3b37" strokeWidth="1.300" />
  </svg>
);
const BatteryIndicator = () => (
  <svg width="31" height="17" viewBox="0 0 31 17" fill="none">
    <rect x="1" y="1" width="26.500" height="15" rx="2" stroke="#dfdbd2" strokeWidth="1.500" />
    <rect x="3" y="3.500" width="14" height="10" fill="#dfdbd2" />
    <path d="M28 5.500h2v6h-2" stroke="#dfdbd2" strokeWidth="1.300" />
  </svg>
);
const MuteIndicator = () => (
  <svg width="22" height="14" viewBox="0 0 22 14" fill="none">
    <path d="M0 4.500h3.500L8 .5v13l-4.500-4H0z" fill="#807e77" />
    <path d="M13.500 3.500l7 7M20.500 3.500l-7 7" stroke="#807e77" strokeWidth="2" />
  </svg>
);
const SessionIndicator = () => (
  <svg width="20" height="21" viewBox="0 0 20 21" fill="none" stroke="#dfdbd2">
    <path d="M6.500 5.300a6.500 6.500 0 1 0 7 0" strokeWidth="2.600" />
    <path d="M10 0v10" strokeWidth="2.600" />
    <path d="M3.700 4.700L2.200 3.200M16.300 4.700l1.500-1.500M2.500 11H0M17.500 11H20M4.500 16.500L2.700 18.300M15.500 16.500l1.800 1.800M10 18v2.800" strokeWidth="2.600" />
  </svg>
);

const MENUS = [
  ["File", 46, 0.7], ["Edit", 50, 0.6], ["View", 60, 0.5], ["Place", 60, -0.1],
  ["Preferences", 123.5, 0.28], ["Tools", 61.5, 0.25], ["Help", 50, 0.25],
];

const SideTools = ({ tools }) =>
  tools.map(([Icon, active], i) => (
    <SideButton key={i} $active={active}><Icon /></SideButton>
  ));

export default function App() {
  return (
    <Window>
      <GlobalStyle />
      <TitleBar>
        <WindowButtons>
          <WindowButton kind="close" />
          <WindowButton kind="min" />
          <WindowButton kind="max" />
        </WindowButtons>
        <WindowTitle $spacing={0.05}>[ flip-pins /] (/home/samata/projects-git/flip-pins)</WindowTitle>
        <Tray>
          <TrayItem $width={42}><LeafIndicator /></TrayItem>
          <TrayItem $width={39}><WifiIndicator /></TrayItem>
          <TrayItem $width={42}><LanguageBadge>En</LanguageBadge></TrayItem>
          <TrayItem $width={39}><MailIndicator /></TrayItem>
          <TrayItem $width={36}><BatteryIndicator /></TrayItem>
          <TrayItem $width={114}><TrayText $spacing={0.35}>(0:35, 56%)</TrayText></TrayItem>
          <TrayItem $width={41}><MuteIndicator /></TrayItem>
          <TrayItem $width={172}><TrayText $spacing={0.23}>Sun Sep 11 01:50</TrayText></TrayItem>
          <TrayItem $width={21}><SessionIndicator /></TrayItem>
        </Tray>
      </TitleBar>
      <MenuBar>
        {MENUS.map(([label, width, spacing]) => (
          <MenuItem key={label} $width={width} $spacing={spacing}>{label}</MenuItem>
        ))}
      </MenuBar>
      <TopToolbar>
        {TOP_TOOLS.map((group, g) => (
          <React.Fragment key={g}>
            {g > 0 && <Separator />}
            {group.map(([Icon, disabled], i) => (
              <ToolButton key={i} $disabled={disabled}><Icon /></ToolButton>
            ))}
          </React.Fragment>
        ))}
      </TopToolbar>
      <Workspace>
        <SideToolbar $width={37}><SideTools tools={LEFT_TOOLS} /></SideToolbar>
        <CanvasFrame>
          <Canvas>
            <Schematic />
            <ScrollThumb $vertical />
            <ScrollThumb />
          </Canvas>
        </CanvasFrame>
        <SideToolbar $width={38} $edge><SideTools tools={RIGHT_TOOLS} /></SideToolbar>
      </Workspace>
      <MessagePanel />
      <StatusBar>
        <StatusField $spacing={0.25}>{"Done Loading </home/samata/projects-git/flip-pins/flip-pins.sch>"}</StatusField>
        <StatusField $spacing={0.1}>Z 3.67</StatusField>
        <StatusField $spacing={0.33}>{"X 3.475  Y 4.425"}</StatusField>
        <StatusField $spacing={0.2}>{"dx 3.475  dy 4.425  dist 5.626"}</StatusField>
        <StatusField $spacing={-0.15}>Inches</StatusField>
      </StatusBar>
    </Window>
  );
}
